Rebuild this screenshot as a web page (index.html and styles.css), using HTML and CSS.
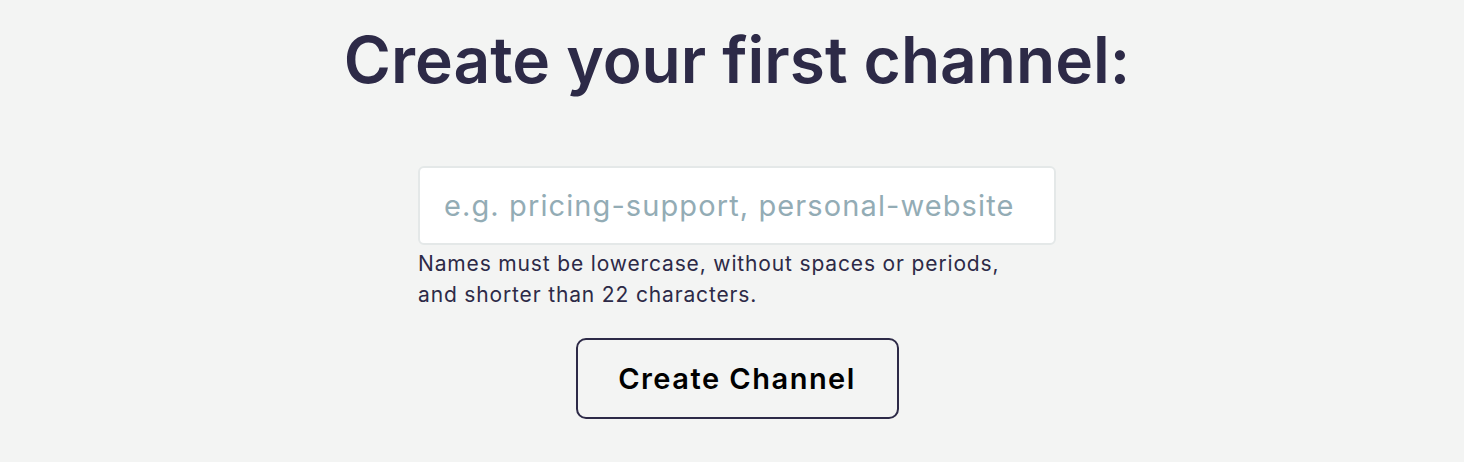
FILE: index.html
```html
<!DOCTYPE html>
<html>
<head>
<meta charset="utf-8">
<link rel="stylesheet" href="styles.css">
</head>
<body>
<main class="page">
  <h1 class="title">Create your first channel:</h1>
  <form class="form">
    <input class="field" type="text" placeholder="e.g. pricing-support, personal-website">
    <p class="hint">Names must be lowercase, without spaces or periods,<br>and shorter than 22 characters.</p>
    <button class="btn" type="button">Create Channel</button>
  </form>
</main>
</body>
</html>
```
FILE: styles.css
```css
html, body {
  margin: 0;
  padding: 0;
  background: #f3f4f3;
}
.page {
  display: flex;
  flex-direction: column;
  align-items: center;
  font-family: "Inter", "Noto Sans", sans-serif;
  color: #2d2a47;
  padding-top: 22px;
  padding-left: 10px;
}
.title {
  margin: 0;
  font-size: 64px;
  font-weight: 600;
  line-height: 76px;
  letter-spacing: 0;
}
.form {
  display: flex;
  flex-direction: column;
  align-items: center;
  margin-top: 68px;
  width: 638px;
}
.field {
  box-sizing: border-box;
  width: 638px;
  height: 79px;
  border: 2px solid #e4e8e8;
  border-radius: 6px;
  background: #fff;
  padding: 0 24px;
  font-family: inherit;
  font-size: 29px;
  letter-spacing: 1.1px;
  color: #2d2a47;
  outline: none;
}
.field::placeholder {
  color: #93acb5;
}
.hint {
  align-self: stretch;
  margin: 3px 0 0;
  font-size: 21px;
  letter-spacing: 0.85px;
  line-height: 31px;
  color: #2d2a47;
}
.btn {
  margin-top: 28px;
  box-sizing: border-box;
  width: 323px;
  height: 81px;
  border: 2px solid #2d2a47;
  border-radius: 10px;
  background: transparent;
  font-family: inherit;
  font-size: 29px;
  font-weight: 600;
  letter-spacing: 1.5px;
  color: #000;
}
```
